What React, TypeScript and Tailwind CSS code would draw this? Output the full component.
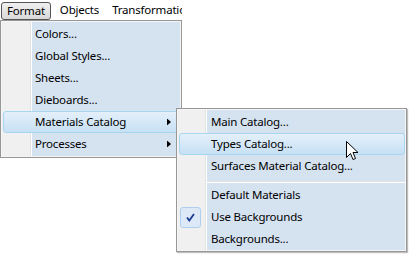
import React from "react";

const font = { fontFamily: '"Segoe UI", "Noto Sans", "Open Sans", sans-serif' };

function Arrow() {
  return (
    <svg width="4" height="7" viewBox="0 0 4 7" className="absolute right-[10px] top-1/2 -translate-y-1/2">
      <path d="M0 0 L4 3.5 L0 7 Z" fill="#000" />
    </svg>
  );
}

function Item({
  label,
  hl,
  arrow,
  check,
  left,
}: {
  label: string;
  hl?: boolean;
  arrow?: boolean;
  check?: boolean;
  left: number;
}) {
  return (
    <div className="relative h-[22px] flex items-center">
      {hl && (
        <div className="absolute inset-y-0 left-[2px] right-[1px] rounded-[3px] border border-[#a6d7ef] bg-gradient-to-b from-[#e4f0fa] to-[#c7e0f4]" />
      )}
      {check && (
        <div className="absolute left-[3px] top-[1px] w-[21px] h-[21px] rounded-[3px] border border-[#aecfee] bg-[#dde9f7] flex items-center justify-center">
          <svg width="9" height="9" viewBox="0 0 9 9">
            <path d="M1 4.5 L3.3 7.5 L8 1" stroke="#1a3a8f" strokeWidth="1.8" fill="none" />
          </svg>
        </div>
      )}
      <span className="relative text-[11.5px] tracking-[-0.2px] text-[#000] leading-none" style={{ marginLeft: left }}>
        {label}
      </span>
      {arrow && <Arrow />}
    </div>
  );
}

export default function App() {
  return (
    <div className="relative w-[409px] h-[254px] bg-white overflow-hidden" style={font}>
      {/* menu bar */}
      <div className="flex items-center h-[20px] w-[182px] overflow-hidden whitespace-nowrap text-[11.5px] tracking-[-0.2px] text-black">
        <div className="ml-[1px] mt-[1px] h-[18px] px-[5px] flex items-center rounded-[3px] border border-[#555] bg-gradient-to-b from-[#f0f0f0] to-[#d9d9d9]">
          Format
        </div>
        <div className="ml-[9px]">Objects</div>
        <div className="ml-[13px]">Transformations</div>
      </div>

      {/* main menu */}
      <div className="absolute left-0 top-[20px] w-[182px] h-[138px] border border-[#979797] bg-[#f5f5f5] p-[1px] flex">
        <div className="w-[28px] bg-[#f0f0f0]" />
        <div className="w-[1px] bg-[#e2e3e3]" />
        <div className="w-[1px] bg-white" />
        <div className="flex-1 bg-[#d5e2f0]" />
        <div className="absolute left-0 right-0 top-[2px]">
          <Item label="Colors..." left={34} />
          <Item label="Global Styles..." left={34} />
          <Item label="Sheets..." left={34} />
          <Item label="Dieboards..." left={34} />
          <Item label="Materials Catalog" left={34} hl arrow />
          <Item label="Processes" left={34} arrow />
        </div>
      </div>

      {/* submenu */}
      <div className="absolute left-[176px] top-[108px] w-[231px] h-[144px] border border-[#979797] bg-[#f5f5f5] p-[1px] flex shadow-[1px_1px_1px_rgba(0,0,0,0.25)]">
        <div className="w-[27px] bg-[#f0f0f0]" />
        <div className="w-[1px] bg-[#e2e3e3]" />
        <div className="w-[1px] bg-white" />
        <div className="flex-1 bg-[#d5e2f0]" />
        <div className="absolute left-0 right-0 top-[2px]">
          <Item label="Main Catalog..." left={34} />
          <Item label="Types Catalog..." left={34} hl />
          <Item label="Surfaces Material Catalog..." left={34} />
          <div className="h-[7px] relative">
            <div className="absolute left-[30px] right-[1px] top-[4px] h-[1px] bg-[#e2e3e3]" />
            <div className="absolute left-[30px] right-[1px] top-[5px] h-[1px] bg-white" />
          </div>
          <Item label="Default Materials" left={34} />
          <Item label="Use Backgrounds" left={34} check />
          <Item label="Backgrounds..." left={34} />
        </div>
      </div>

      {/* cursor */}
      <svg className="absolute left-[346px] top-[141px]" width="13" height="20" viewBox="0 0 13 20">
        <path
          d="M0.5 0.5 L0.5 16.5 L4.5 12.5 L7 18.5 L9.5 17.5 L7 11.5 L12 11.5 Z"
          fill="#fff"
          stroke="#000"
          strokeWidth="1"
          strokeLinejoin="miter"
        />
      </svg>
    </div>
  );
}
